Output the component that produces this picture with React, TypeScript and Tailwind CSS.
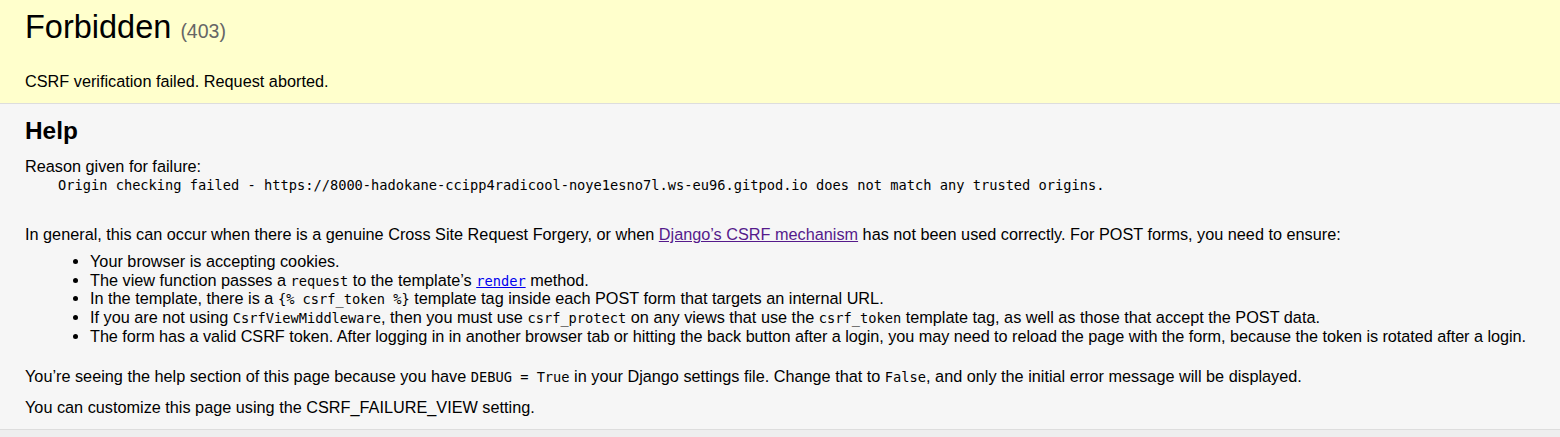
const mono = "font-['DejaVu_Sans_Mono','Liberation_Mono',monospace] text-[13.7px]";

function Code({ children }: { children: React.ReactNode }) {
  return <code className={`${mono} leading-none`}>{children}</code>;
}

export default function App() {
  return (
    <div className="min-h-[437px] bg-[#eeeeee] text-black font-['Liberation_Sans',Arial,sans-serif] text-[16.25px] leading-[1.15]">
      {/* Summary */}
      <div className="bg-[#ffffcc] border-b border-[#dddddd] px-[25px] pt-[9px] pb-[12.5px]">
        <h1 className="text-[32.5px] font-normal mb-[13px]">
          Forbidden <span className="text-[19.5px] text-[#666666]">(403)</span>
        </h1>
        <p className="pt-[12.5px]">CSRF verification failed. Request aborted.</p>
      </div>

      {/* Help */}
      <div className="bg-[#f6f6f6] border-b border-[#dddddd] px-[25px] py-[12.5px]">
        <h2 className="text-[24.4px] font-bold">Help</h2>
        <p className="pt-[12.5px]">Reason given for failure:</p>
        <pre className={`${mono} leading-[18.5px] whitespace-pre`}>
          {"    Origin checking failed - https://8000-hadokane-ccipp4radicool-noye1esno7l.ws-eu96.gitpod.io does not match any trusted origins.\n    "}
        </pre>
        <p className="pt-[12.5px]">
          In general, this can occur when there is a genuine Cross Site Request Forgery, or when{" "}
          <a href="#" className="text-[#551a8b] underline">
            Django’s CSRF mechanism
          </a>{" "}
          has not been used correctly. For POST forms, you need to ensure:
        </p>
        <ul className="list-disc mt-[8px] mb-[9px] ml-[65px] -mr-[20px] leading-[18.7px]">
          <li>Your browser is accepting cookies.</li>
          <li>
            The view function passes a <Code>request</Code> to the template’s{" "}
            <a href="#" className="text-[#0000ee] underline">
              <Code>render</Code>
            </a>{" "}
            method.
          </li>
          <li>
            In the template, there is a <Code>{"{% csrf_token %}"}</Code> template tag inside each POST form that
            targets an internal URL.
          </li>
          <li>
            If you are not using <Code>CsrfViewMiddleware</Code>, then you must use <Code>csrf_protect</Code> on any
            views that use the <Code>csrf_token</Code> template tag, as well as those that accept the POST data.
          </li>
          <li className="whitespace-nowrap tracking-[-0.05px]">
            The form has a valid CSRF token. After logging in in another browser tab or hitting the back button after
            a login, you may need to reload the page with the form, because the token is rotated after a login.
          </li>
        </ul>
        <p className="pt-[12.5px]">
          You’re seeing the help section of this page because you have <Code>DEBUG = True</Code> in your Django
          settings file. Change that to <Code>False</Code>, and only the initial error message will be displayed.
        </p>
        <p className="pt-[12.5px]">You can customize this page using the CSRF_FAILURE_VIEW setting.</p>
      </div>
    </div>
  );
}
